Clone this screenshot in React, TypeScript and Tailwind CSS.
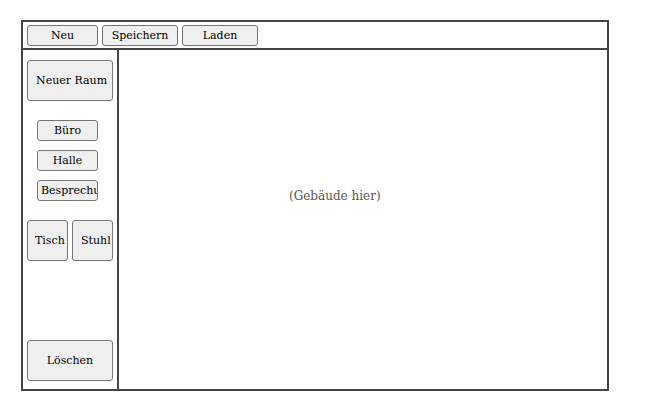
import React from "react";

const btn =
  "h-[21px] bg-[#efefef] border border-[#767676] rounded-[3px] text-[11px] leading-none text-black flex items-center justify-center overflow-hidden whitespace-nowrap";
const bigBtn =
  "h-[41px] bg-[#efefef] border border-[#767676] rounded-[3px] text-[11px] leading-none text-black flex items-center justify-center overflow-hidden whitespace-nowrap";

export default function App() {
  return (
    <div
      className="w-[646px] h-[413px] bg-white pt-[20px] pl-[21px]"
      style={{ fontFamily: '"DejaVu Serif", Georgia, serif' }}
    >
      <div className="w-[588px] h-[371px] border-2 border-[#444] flex flex-col">
        <div className="h-[28px] border-b-2 border-[#444] flex items-start gap-[4px] pt-[3px] pl-[4px] shrink-0">
          <button className={`${btn} w-[71px]`}>Neu</button>
          <button className={`${btn} w-[76px]`}>Speichern</button>
          <button className={`${btn} w-[76px]`}>Laden</button>
        </div>
        <div className="flex flex-1 min-h-0">
          <div className="w-[96px] border-r-2 border-[#444] flex flex-col px-[4px] pt-[10px] pb-[8px] shrink-0">
            <button className={`${bigBtn} w-[86px] justify-start pl-[8px]`}>Neuer Raum</button>
            <div className="flex flex-col gap-[9px] mt-[19px] pl-[10px]">
              <button className={`${btn} w-[61px]`}>Büro</button>
              <button className={`${btn} w-[61px]`}>Halle</button>
              <button className={`${btn} w-[61px] justify-start pl-[3px]`}>Besprechung</button>
            </div>
            <div className="flex gap-[4px] mt-[19px]">
              <button className={`${bigBtn} w-[41px] justify-start pl-[7px]`}>Tisch</button>
              <button className={`${bigBtn} w-[41px] justify-start pl-[8px]`}>Stuhl</button>
            </div>
            <div className="flex-1" />
            <button className={`${bigBtn} w-[86px]`}>Löschen</button>
          </div>
          <div className="flex-1 pl-[170px] pt-[133px]">
            <span className="text-[12px] text-[#555] whitespace-nowrap">(Gebäude hier)</span>
          </div>
        </div>
      </div>
    </div>
  );
}
